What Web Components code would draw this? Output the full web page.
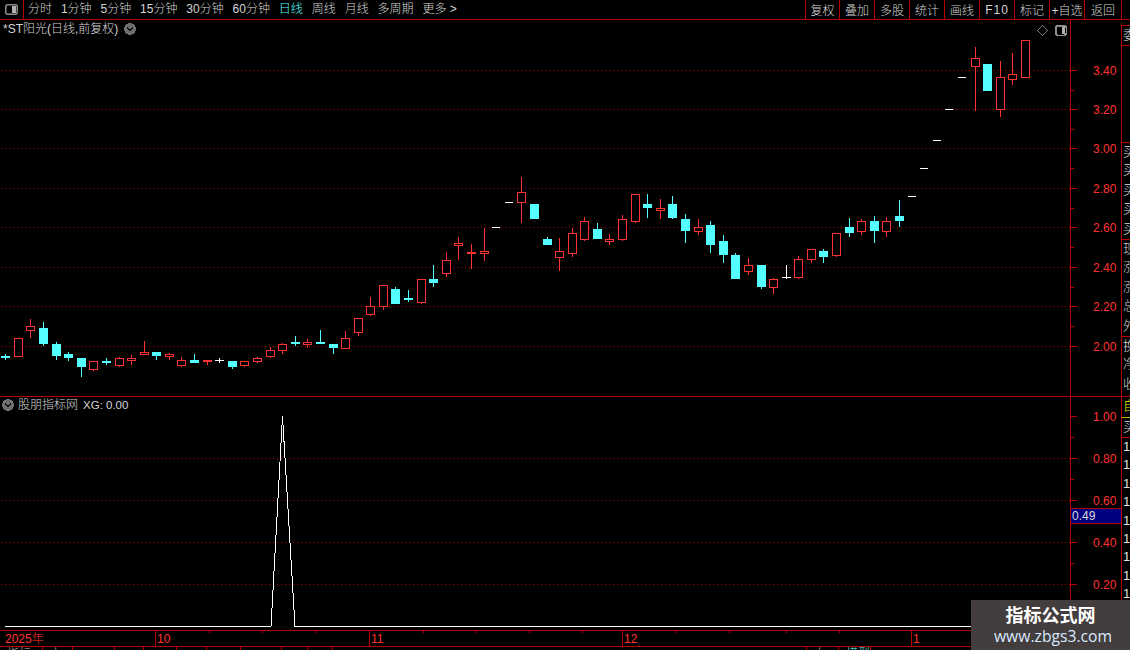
<!DOCTYPE html>
<html lang="zh">
<head>
<meta charset="utf-8">
<title>*ST阳光</title>
<style>
  html, body { margin: 0; height: 100%; background: #000; overflow: hidden; }
  body { font: 300 12px "Liberation Sans", "Noto Sans CJK SC", sans-serif; color: #d4d4d4; }
</style>
</head>
<body>
<tdx-app>
  <tdx-toolbar>
    <tdx-period>分时</tdx-period>
    <tdx-period>1分钟</tdx-period>
    <tdx-period>5分钟</tdx-period>
    <tdx-period>15分钟</tdx-period>
    <tdx-period>30分钟</tdx-period>
    <tdx-period>60分钟</tdx-period>
    <tdx-period active>日线</tdx-period>
    <tdx-period>周线</tdx-period>
    <tdx-period>月线</tdx-period>
    <tdx-period>多周期</tdx-period>
    <tdx-period>更多 &gt;</tdx-period>
    <tdx-tool slot="tools">复权</tdx-tool>
    <tdx-tool slot="tools">叠加</tdx-tool>
    <tdx-tool slot="tools">多股</tdx-tool>
    <tdx-tool slot="tools">统计</tdx-tool>
    <tdx-tool slot="tools">画线</tdx-tool>
    <tdx-tool slot="tools"><span style="letter-spacing:1px">F10</span></tdx-tool>
    <tdx-tool slot="tools">标记</tdx-tool>
    <tdx-tool slot="tools">+自选</tdx-tool>
    <tdx-tool slot="tools">返回</tdx-tool>
  </tdx-toolbar>
  <tdx-panes>
    <tdx-price-pane></tdx-price-pane>
    <tdx-signal-pane></tdx-signal-pane>
    <tdx-side-panel slot="side"></tdx-side-panel>
  </tdx-panes>
  <tdx-time-axis></tdx-time-axis>
  <tdx-footer></tdx-footer>
  <tdx-watermark></tdx-watermark>
</tdx-app>

<script>
(function () {
  const FONT = '"Liberation Sans", "Noto Sans CJK SC", sans-serif';
  const LINE = "#b80000";
  const GRID = "#b80000";
  const RED = "#ff3232";
  const CYAN = "#54ffff";
  const TEXT = "#d4d4d4";

  /* =========================
     CANDLES
     [left, wickTop, wickBottom, bodyTop, bodyBottom, kind]
  ========================= */
  const CANDLES = [
    [1, 354, 360, 356, 358, "c"], [14, 338, 357, 338, 357, "r"], [26, 319, 338, 326, 331, "r"],
    [39, 322, 346, 328, 344, "c"], [52, 342, 360, 344, 356, "c"], [64, 352, 361, 354, 358, "c"],
    [77, 358, 377, 358, 367, "c"], [89, 361, 371, 361, 370, "r"], [102, 358, 365, 361, 363, "c"],
    [115, 357, 367, 358, 366, "r"], [127, 355, 365, 358, 361, "r"], [140, 341, 355, 352, 355, "r"],
    [152, 352, 360, 352, 356, "c"], [165, 353, 360, 354, 357, "r"], [177, 357, 367, 360, 366, "r"],
    [190, 354, 363, 360, 363, "c"], [203, 360, 365, 360, 362, "f"], [215, 358, 363, 360, 361, "w"],
    [228, 361, 369, 361, 367, "c"], [240, 361, 367, 361, 366, "r"], [253, 357, 363, 358, 362, "r"],
    [266, 347, 358, 350, 357, "r"], [278, 343, 354, 344, 351, "r"], [291, 336, 346, 342, 344, "c"],
    [303, 339, 348, 342, 345, "r"], [316, 330, 344, 342, 344, "c"], [329, 344, 354, 344, 348, "c"],
    [341, 331, 349, 338, 349, "r"], [354, 318, 336, 318, 333, "r"], [366, 297, 316, 306, 315, "r"],
    [379, 285, 310, 285, 307, "r"], [391, 287, 304, 289, 304, "c"], [404, 290, 302, 298, 300, "c"],
    [417, 279, 304, 279, 303, "r"], [429, 265, 287, 279, 283, "c"], [442, 252, 277, 260, 274, "r"],
    [454, 237, 260, 243, 246, "r"], [467, 244, 269, 252, 254, "r"], [480, 228, 261, 251, 254, "r"],
    [492, 227, 228, 227, 228, "d"], [505, 202, 203, 202, 203, "d"], [517, 177, 223, 192, 203, "r"],
    [530, 204, 219, 204, 219, "c"], [543, 237, 245, 239, 245, "c"], [555, 238, 271, 251, 258, "r"],
    [568, 228, 257, 233, 254, "r"], [580, 217, 241, 221, 240, "r"], [593, 223, 239, 229, 239, "c"],
    [605, 234, 245, 239, 242, "r"], [618, 215, 241, 219, 240, "r"], [631, 194, 223, 194, 222, "r"],
    [643, 194, 218, 204, 208, "c"], [656, 199, 219, 208, 211, "r"], [668, 196, 219, 204, 218, "c"],
    [681, 214, 243, 219, 231, "c"], [694, 219, 235, 227, 232, "r"], [706, 221, 253, 225, 245, "c"],
    [719, 235, 263, 241, 255, "c"], [731, 253, 279, 255, 279, "c"], [744, 258, 275, 265, 272, "r"],
    [757, 265, 289, 265, 287, "c"], [769, 278, 294, 279, 288, "r"], [782, 265, 279, 277, 278, "w"],
    [794, 256, 279, 259, 278, "r"], [807, 249, 263, 249, 260, "r"], [819, 249, 263, 251, 257, "c"],
    [832, 233, 257, 233, 256, "r"], [845, 218, 237, 227, 233, "c"], [857, 219, 235, 221, 232, "r"],
    [870, 216, 243, 221, 231, "c"], [882, 217, 237, 221, 232, "r"], [895, 200, 227, 216, 221, "c"],
    [908, 196, 197, 196, 197, "d"], [920, 168, 169, 168, 169, "d"], [933, 140, 141, 140, 141, "d"],
    [945, 109, 110, 109, 110, "d"], [958, 77, 78, 77, 78, "d"], [971, 47, 111, 58, 67, "r"],
    [983, 64, 91, 64, 91, "c"], [996, 61, 117, 77, 110, "r"], [1008, 53, 85, 74, 80, "r"],
    [1021, 40, 78, 40, 78, "r"],
  ];

  function candleSvg(c) {
    const [l, wt, wb, bt, bb, kind] = c;
    if (kind === "d") {
      return `<rect x="${l}" y="${bt}" width="8" height="1" fill="#fff"/>`;
    }
    const color = kind === "c" ? CYAN : kind === "w" ? "#fff" : RED;
    const wick = `<rect x="${l + 4}" y="${wt}" width="1" height="${wb - wt}" fill="${color}"/>`;
    if (kind === "r") {
      return (
        wick +
        `<rect x="${l}" y="${bt}" width="9" height="${bb - bt}" fill="#000"/>` +
        `<rect x="${l + 0.5}" y="${bt + 0.5}" width="8" height="${bb - bt - 1}" fill="none" stroke="${color}"/>`
      );
    }
    return wick + `<rect x="${l}" y="${bt}" width="9" height="${bb - bt}" fill="${color}"/>`;
  }

  function gridSvg(ys) {
    return ys
      .map(
        (y) =>
          `<line x1="1" x2="1070" y1="${y + 0.5}" y2="${y + 0.5}" stroke="${GRID}" stroke-dasharray="1 3"/>`,
      )
      .join("");
  }

  const CHEVRON = `
    <svg width="12" height="12" viewBox="0 0 12 12">
      <circle cx="6" cy="6" r="6" fill="#6e6e6e"/>
      <path d="M3.2 4.8 L6 7.6 L8.8 4.8" fill="none" stroke="#111" stroke-width="1.4"/>
    </svg>`;

  /* =========================
     APP SHELL
  ========================= */
  class TdxApp extends HTMLElement {
    constructor() {
      super();
      this.attachShadow({ mode: "open" });
      this.shadowRoot.innerHTML = `
      <style>
        :host{
          display:flex;
          flex-direction:column;
          position:relative;
          width:1130px;
          height:650px;
          overflow:hidden;
          background:#000;
        }
      </style>
      <slot></slot>`;
    }
  }

  /* =========================
     TOOLBAR
  ========================= */
  class TdxToolbar extends HTMLElement {
    constructor() {
      super();
      this.attachShadow({ mode: "open" });
      this.shadowRoot.innerHTML = `
      <style>
        :host{
          display:flex;
          height:19px;
          border-bottom:1px solid ${LINE};
          box-sizing:content-box;
        }
        .toggle{
          width:23px;
          border-right:1px solid ${LINE};
          display:flex;
          align-items:center;
          justify-content:center;
        }
        .periods{
          flex:1;
          display:flex;
          align-items:center;
          gap:8.9px;
          padding-left:4px;
        }
        .tools{
          display:flex;
          padding-right:8px;
        }
      </style>
      <div class="toggle">
        <svg width="13" height="11" viewBox="0 0 13 11">
          <rect x="0.75" y="0.75" width="11.5" height="9.5" rx="2" fill="none" stroke="#8c8c8c" stroke-width="1.5"/>
          <rect x="7" y="2" width="4" height="7" fill="#b0b0b0"/>
        </svg>
      </div>
      <div class="periods"><slot></slot></div>
      <div class="tools"><slot name="tools"></slot></div>`;
    }
  }

  class TdxPeriod extends HTMLElement {
    constructor() {
      super();
      this.attachShadow({ mode: "open" });
      this.shadowRoot.innerHTML = `
      <style>
        :host{ display:block; white-space:nowrap; color:${TEXT}; line-height:19px; }
        :host([active]){ color:${CYAN}; }
      </style>
      <slot></slot>`;
    }
  }

  class TdxTool extends HTMLElement {
    constructor() {
      super();
      this.attachShadow({ mode: "open" });
      this.shadowRoot.innerHTML = `
      <style>
        :host{
          display:flex;
          align-items:center;
          justify-content:center;
          box-sizing:border-box;
          width:35px;
          border-left:1px solid ${LINE};
          color:${TEXT};
          white-space:nowrap;
        }
        :host(:first-of-type){ width:34px; }
        :host(:last-of-type){ border-right:1px solid ${LINE}; width:38px; }
      </style>
      <slot></slot>`;
    }
  }

  /* =========================
     PANES LAYOUT
  ========================= */
  class TdxPanes extends HTMLElement {
    constructor() {
      super();
      this.attachShadow({ mode: "open" });
      this.shadowRoot.innerHTML = `
      <style>
        :host{ display:flex; height:611px; }
        .charts{ width:1121px; display:flex; flex-direction:column; }
        .side{ flex:1; min-width:0; }
      </style>
      <div class="charts"><slot></slot></div>
      <div class="side"><slot name="side"></slot></div>`;
    }
  }

  /* =========================
     PRICE AXIS
     ys: row of each label, minor tick half way to the next one
  ========================= */
  function axisSvg(top, height, ys, labels) {
    let out = "";
    labels.forEach((label, i) => {
      const y = ys[i];
      out += `<rect x="0" y="${y}" width="6" height="1" fill="${LINE}"/>`;
      if (i < labels.length - 1) {
        out += `<rect x="0" y="${Math.round((y + ys[i + 1]) / 2)}" width="3" height="1" fill="${LINE}"/>`;
      }
      out += `<text x="22" y="${y + 5}" fill="${RED}" font-size="12" font-family='${FONT}'>${label}</text>`;
    });
    return `<svg width="50" height="${height}" viewBox="0 ${top} 50 ${height}">${out}</svg>`;
  }

  /* =========================
     PRICE PANE
  ========================= */
  class TdxPricePane extends HTMLElement {
    constructor() {
      super();
      this.attachShadow({ mode: "open" });
      this.render();
    }

    render() {
      const ys = [70, 109, 148, 188, 227, 267, 306, 346];
      const bars = CANDLES.map(candleSvg).join("");
      this.shadowRoot.innerHTML = `
      <style>
        :host{
          display:flex;
          position:relative;
          height:376px;
          border-bottom:1px solid ${LINE};
          width:1130px;
        }
        .plot{ width:1070px; }
        .axis{ width:50px; border-left:1px solid ${LINE}; }
        svg{ display:block; shape-rendering:crispEdges; }
        .axis svg{ shape-rendering:auto; }
        .legend{
          position:absolute;
          left:3px;
          top:2px;
          display:flex;
          align-items:center;
          gap:6px;
          line-height:14px;
          color:${TEXT};
          white-space:nowrap;
        }
        .tools{
          position:absolute;
          left:1037px;
          top:5px;
          display:flex;
          align-items:center;
          gap:7px;
        }
      </style>
      <div class="plot">
        <svg width="1070" height="376" viewBox="0 20 1070 376">${gridSvg(ys)}${bars}</svg>
      </div>
      <div class="axis">${axisSvg(20, 376, ys, ["3.40", "3.20", "3.00", "2.80", "2.60", "2.40", "2.20", "2.00"])}</div>
      <div class="legend"><span>*ST阳光(日线,前复权)</span>${CHEVRON}</div>
      <div class="tools">
        <svg width="11" height="11" viewBox="0 0 11 11">
          <path d="M5.5 0.7 L10.3 5.5 L5.5 10.3 L0.7 5.5 Z" fill="none" stroke="#7a7a7a"/>
        </svg>
        <svg width="12" height="11" viewBox="0 0 12 11">
          <rect x="0.75" y="0.75" width="10.5" height="9.5" rx="2" fill="none" stroke="#8c8c8c" stroke-width="1.5"/>
          <rect x="6.5" y="2" width="3.5" height="7" fill="#b0b0b0"/>
        </svg>
      </div>`;
    }
  }

  /* =========================
     SIGNAL PANE
  ========================= */
  class TdxSignalPane extends HTMLElement {
    constructor() {
      super();
      this.attachShadow({ mode: "open" });
      this.render();
    }

    render() {
      this.shadowRoot.innerHTML = `
      <style>
        :host{
          display:flex;
          position:relative;
          height:233px;
          border-bottom:1px solid ${LINE};
          width:1130px;
        }
        .plot{ width:1070px; }
        .axis{ width:50px; border-left:1px solid ${LINE}; }
        svg{ display:block; shape-rendering:crispEdges; }
        .axis svg{ shape-rendering:auto; }
        .legend{
          position:absolute;
          left:2px;
          top:1px;
          display:flex;
          align-items:center;
          gap:4px;
          line-height:14px;
          color:${TEXT};
          white-space:nowrap;
        }
        .legend b{ font-weight:300; font-size:11.5px; margin-left:1px; }
        .tag{
          position:absolute;
          left:1071px;
          top:111px;
          width:50px;
          height:16px;
          box-sizing:border-box;
          background:#000080;
          border:1px solid ${LINE};
          border-width:1px 0;
          color:#d8d8d8;
          line-height:14px;
          padding-left:1px;
        }
      </style>
      <div class="plot">
        <svg width="1070" height="233" viewBox="0 397 1070 233">
          ${gridSvg([458, 500, 542, 584])}
          <path d="M5 626.5 H271 L282.5 416 L295 626.5 H1070" fill="none" stroke="#fff"/>
        </svg>
      </div>
      <div class="axis">${axisSvg(397, 233, [416, 458, 500, 542, 584], ["1.00", "0.80", "0.60", "0.40", "0.20"])}</div>
      <div class="legend">${CHEVRON}<span>股朋指标网</span><b>XG: 0.00</b></div>
      <div class="tag">0.49</div>`;
    }
  }

  /* =========================
     RIGHT SIDE COLUMN (clipped by window)
  ========================= */
  class TdxSidePanel extends HTMLElement {
    constructor() {
      super();
      this.attachShadow({ mode: "open" });
      this.render();
    }

    cell(text, h, cls) {
      return `<div class="row ${cls || ""}" style="height:${h}px">${text}</div>`;
    }

    render() {
      const g = 19.4;
      let rows = "";
      rows += this.cell("", 5, "blank");
      rows += this.cell("委", 21, "line b");
      rows += this.cell("", 96);
      ["买", "买", "买", "买", "买"].forEach((t, i) => (rows += this.cell(t, g, i === 0 ? "t" : "")));
      ["现", "涨", "涨", "总", "外"].forEach((t, i) => (rows += this.cell(t, g, i === 0 ? "t" : "")));
      ["换", "净", "收"].forEach((t, i) => (rows += this.cell(t, g, i === 0 ? "t" : "")));
      rows += this.cell("", 2);
      rows += this.cell("自", 21, "t yellow");
      rows += this.cell("买", 21, "line y");
      for (let i = 0; i < 10; i++) rows += this.cell("1", 18.4, "num");

      this.shadowRoot.innerHTML = `
      <style>
        :host{ display:block; height:611px; overflow:hidden; }
        .row{
          box-sizing:border-box;
          border-left:1px solid ${LINE};
          padding-left:1px;
          font-size:13px;
          line-height:18px;
          color:#d8d8d8;
          white-space:nowrap;
          overflow:hidden;
        }
        .blank{ border-left-color:transparent; }
        .t{ border-top:1px solid ${LINE}; }
        .line{ border-top:1px solid ${LINE}; }
        .b{ border-bottom:1px solid ${LINE}; }
        .y{ border-top-color:#c8b400; border-bottom:1px solid ${LINE}; }
        .yellow{ color:#e8e800; }
        .num{ font-size:13px; color:#e0e0e0; }
      </style>
      ${rows}`;
    }
  }

  /* =========================
     TIME AXIS
  ========================= */
  class TdxTimeAxis extends HTMLElement {
    constructor() {
      super();
      this.attachShadow({ mode: "open" });
      this.render();
    }

    render() {
      const months = [
        [155, "10"],
        [369, "11"],
        [622, "12"],
        [911, "1"],
      ];
      const ticks = [209, 262, 316, 423, 476, 529, 582, 675, 729, 786, 839];
      let out = `<text x="5" y="12" font-size="12" fill="${RED}" font-family='${FONT}'>2025年</text>`;
      months.forEach(([x, label]) => {
        out += `<rect x="${x}" y="0" width="1" height="15" fill="${LINE}"/>`;
        out += `<text x="${x + 2}" y="12" font-size="12" fill="${RED}" font-family='${FONT}'>${label}</text>`;
      });
      ticks.forEach((x) => {
        out += `<rect x="${x}" y="0" width="1" height="2" fill="${LINE}"/>`;
      });
      this.shadowRoot.innerHTML = `
      <style>
        :host{ display:block; height:15px; border-bottom:1px solid ${LINE}; }
        svg{ display:block; }
      </style>
      <svg width="1130" height="15" viewBox="0 0 1130 15">${out}</svg>`;
    }
  }

  /* =========================
     BOTTOM TABS (clipped by window)
  ========================= */
  class TdxFooter extends HTMLElement {
    constructor() {
      super();
      this.attachShadow({ mode: "open" });
      const cells = [
        [43, "指标"], [30, "上"], [42, ""], [29, ""], [33, ""], [30, ""], [34, ""],
        [41, ""], [26, ""], [25, ""], [474, ""], [32, "上"], [32, "模型", "#54ffff"], [259, ""],
      ];
      this.shadowRoot.innerHTML = `
      <style>
        :host{ display:flex; height:3px; overflow:hidden; }
        div{
          box-sizing:border-box;
          border-right:1px solid ${LINE};
          padding-left:7px;
          line-height:14px;
          height:14px;
          color:#c0c0c0;
          white-space:nowrap;
          overflow:hidden;
          flex:none;
        }
      </style>
      ${cells
        .map(
          ([w, t, c]) =>
            `<div style="width:${w}px${c ? ";color:" + c : ""}">${t}</div>`,
        )
        .join("")}`;
    }
  }

  /* =========================
     WATERMARK
  ========================= */
  class TdxWatermark extends HTMLElement {
    constructor() {
      super();
      this.attachShadow({ mode: "open" });
      this.shadowRoot.innerHTML = `
      <style>
        :host{
          position:absolute;
          right:0;
          bottom:0;
          width:159px;
          height:50px;
          background:#433d3d;
          display:flex;
          flex-direction:column;
          align-items:center;
          padding-top:4px;
          box-sizing:border-box;
        }
        .name{ font-size:18px; line-height:24px; font-weight:700; color:#fff; }
        .url{ font-family:"Open Sans", sans-serif; font-weight:400; font-size:15.7px; line-height:16px; margin-left:5px; color:#d8eaff; }
      </style>
      <div class="name">指标公式网</div>
      <div class="url">www.zbgs3.com</div>`;
    }
  }

  customElements.define("tdx-app", TdxApp);
  customElements.define("tdx-toolbar", TdxToolbar);
  customElements.define("tdx-period", TdxPeriod);
  customElements.define("tdx-tool", TdxTool);
  customElements.define("tdx-panes", TdxPanes);
  customElements.define("tdx-price-pane", TdxPricePane);
  customElements.define("tdx-signal-pane", TdxSignalPane);
  customElements.define("tdx-side-panel", TdxSidePanel);
  customElements.define("tdx-time-axis", TdxTimeAxis);
  customElements.define("tdx-footer", TdxFooter);
  customElements.define("tdx-watermark", TdxWatermark);
})();
</script>
</body>
</html>
